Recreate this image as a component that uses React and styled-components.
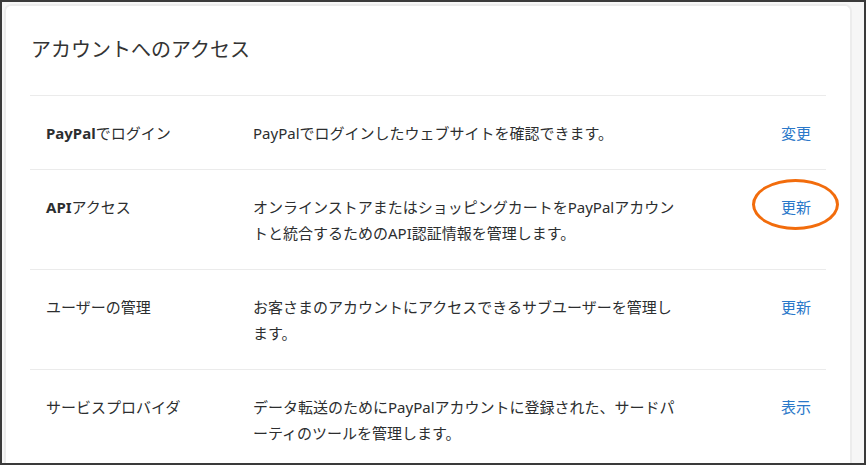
import styled, { createGlobalStyle } from 'styled-components';

const GlobalStyle = createGlobalStyle`
	html, body {
		margin: 0;
		padding: 0;
	}
	body {
		font-family: "Noto Sans", "Noto Sans CJK JP", sans-serif;
		color: #2c2e2f;
	}
`;

const Frame = styled.div`
	box-sizing: border-box;
	width: 866px;
	height: 465px;
	border: 2px solid #3a3a3a;
	border-top-width: 2px;
	background: #f6f6f6;
	padding: 2px 0 0 2px;
	overflow: hidden;
`;

const Card = styled.section`
	box-sizing: border-box;
	width: 848px;
	height: 100%;
	background: #fff;
	border: 2px solid #ececec;
	border-bottom: none;
	border-radius: 7px 7px 0 0;
	padding: 0 24px;
	overflow: hidden;
`;

const Title = styled.h2`
	margin: 0;
	padding: 30px 0 31px 1px;
	font-size: 20px;
	line-height: 28px;
	font-weight: 400;
	color: #333;
	border-bottom: 1px solid #ebebeb;
`;

const Row = styled.div`
	display: grid;
	grid-template-columns: 223px 430px 1fr;
	align-items: start;
	padding: 24px 0 23px;
	border-bottom: 1px solid #ebebeb;
	font-size: 15px;
	line-height: 26px;
`;

const Label = styled.div`
	padding-left: 16px;
	color: #2c2e2f;

	b {
		font-weight: 700;
	}
`;

const Description = styled.div`
	color: #2c2e2f;
`;

const Action = styled.div`
	display: flex;
	justify-content: flex-end;
	padding-right: 15px;
`;

const LinkWrap = styled.span`
	position: relative;
	display: inline-block;
`;

const Link = styled.a`
	color: #2a78c9;
	text-decoration: none;
	cursor: pointer;
`;

const Highlight = styled.span`
	position: absolute;
	left: -29px;
	top: -15px;
	width: 87px;
	height: 51px;
	box-sizing: border-box;
	border: 3px solid #f26c0c;
	border-radius: 50%;
	pointer-events: none;
`;

const rows = [
	{
		label: <><b>PayPal</b>でログイン</>,
		text: 'PayPalでログインしたウェブサイトを確認できます。',
		action: '変更',
	},
	{
		label: <><b>API</b>アクセス</>,
		text: 'オンラインストアまたはショッピングカートをPayPalアカウントと統合するためのAPI認証情報を管理します。',
		action: '更新',
		marked: true,
	},
	{
		label: 'ユーザーの管理',
		text: 'お客さまのアカウントにアクセスできるサブユーザーを管理します。',
		action: '更新',
	},
	{
		label: 'サービスプロバイダ',
		text: 'データ転送のためにPayPalアカウントに登録された、サードパーティのツールを管理します。',
		action: '表示',
	},
];

export default function App() {
	return (
		<>
			<GlobalStyle />
			<Frame>
				<Card>
					<Title>アカウントへのアクセス</Title>
					{rows.map((row, i) => (
						<Row key={i}>
							<Label>{row.label}</Label>
							<Description>{row.text}</Description>
							<Action>
								<LinkWrap>
									<Link>{row.action}</Link>
									{row.marked && <Highlight />}
								</LinkWrap>
							</Action>
						</Row>
					))}
				</Card>
			</Frame>
		</>
	);
}
